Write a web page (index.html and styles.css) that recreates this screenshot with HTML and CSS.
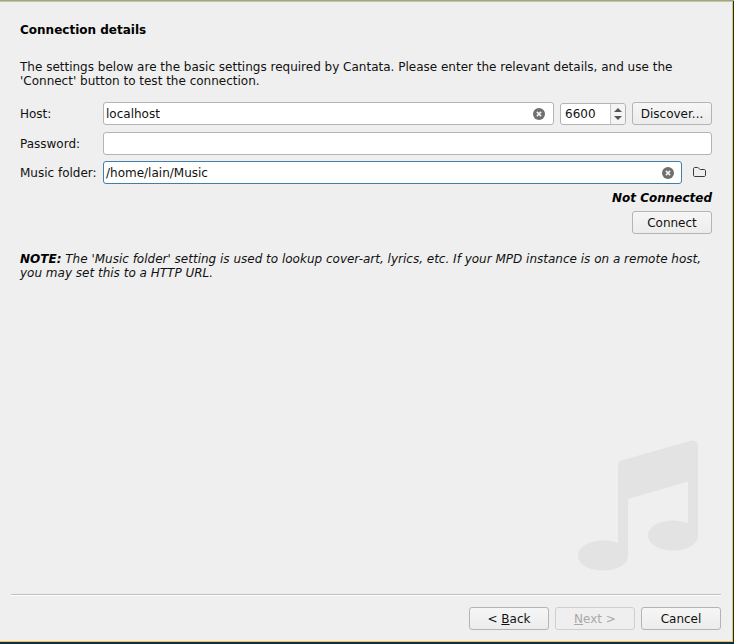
FILE: index.html
```html
<!DOCTYPE html>
<html lang="en">
<head>
<meta charset="utf-8">
<title>Connection details</title>
<link rel="stylesheet" href="styles.css">
</head>
<body>
<div class="desktop-top"></div>
<main class="window">
  <div class="content">
    <h1 class="title">Connection details</h1>
    <p class="intro">The settings below are the basic settings required by Cantata. Please enter the relevant details, and use the<br>'Connect' button to test the connection.</p>
    <div class="form">
      <div class="label">Host:</div>
      <div class="row">
        <div class="field grow">
          <span class="value">localhost</span>
          <svg class="clear" viewBox="0 0 14 14"><circle cx="7" cy="7" r="6" fill="#6f6f6f"/><path d="M4.900 4.900l4.200 4.200M9.100 4.900L4.900 9.100" stroke="#efefef" stroke-width="1.700"/></svg>
        </div>
        <div class="spin">
          <span class="spin-value">6600</span>
          <div class="spin-arrows">
            <svg viewBox="0 0 10 6" class="arrow"><path d="M5 1L9 5H1z" fill="#555"/></svg>
            <svg viewBox="0 0 10 6" class="arrow"><path d="M1 1H9L5 5z" fill="#555"/></svg>
          </div>
        </div>
        <button class="btn">Discover...</button>
      </div>
      <div class="label">Password:</div>
      <div class="row">
        <div class="field grow"></div>
      </div>
      <div class="label">Music folder:</div>
      <div class="row music">
        <div class="field grow focus">
          <span class="value">/home/lain/Music</span>
          <svg class="clear" viewBox="0 0 14 14"><circle cx="7" cy="7" r="6" fill="#6f6f6f"/><path d="M4.900 4.900l4.200 4.200M9.100 4.900L4.900 9.100" stroke="#efefef" stroke-width="1.700"/></svg>
        </div>
        <svg class="folder" viewBox="0 0 13 11"><path d="M.5 2C.5 1 1 .5 2 .5h2.500c.8 0 1 .3 1.500 1s.7 1 1.500 1H11c1 0 1.500.5 1.500 1.500v4c0 1-.5 1.500-1.500 1.500H2c-1 0-1.500-.5-1.500-1.500z" fill="none" stroke="#3a3a3a"/></svg>
      </div>
    </div>
    <div class="status">Not Connected</div>
    <div class="connect-row"><button class="btn">Connect</button></div>
    <p class="note"><b>NOTE:</b> The 'Music folder' setting is used to lookup cover-art, lyrics, etc. If your MPD instance is on a remote host, you may set this to a HTTP URL.</p>
  </div>
  <svg class="watermark" viewBox="0 0 120 130"><path d="M40 25.500c0-2.500 1.500-5 4-5.700L113 .2c3.500-1 7 1.500 7 5V95c0 9-11 15-25 15s-25-6.500-25-15 11-15 25-15c5 0 10 1 15 2.500V41L50 58.500V115c0 9-11 15-25 15S0 123.500 0 115s11-15 25-15c5 0 10 .5 15 2.500z" fill="#e3e3e3"/></svg>
  <div class="footer">
    <div class="separator"></div>
    <div class="actions">
      <button class="btn"><span>&lt; <u>B</u>ack</span></button>
      <button class="btn disabled"><span><u>N</u>ext &gt;</span></button>
      <button class="btn cancel">Cancel</button>
    </div>
  </div>
</main>
</body>
</html>
```
FILE: styles.css
```css
* { box-sizing: border-box; }
html, body { margin: 0; padding: 0; }
body {
  width: 734px;
  height: 644px;
  overflow: hidden;
  background: #12303c;
  font-family: "DejaVu Sans", sans-serif;
  font-size: 12px;
  color: #111;
}
.desktop-top { height: 1px; background: #6fb0d0; }
.window {
  position: relative;
  width: 733px;
  height: 641px;
  background: #efefef;
  border: 1px solid #f5c04f;
  border-left: 0;
  display: flex;
  flex-direction: column;
}
.content { flex: 1; padding: 0 20px; }
.title {
  margin: 21px 0 0;
  font-size: 12px;
  line-height: 15px;
  font-weight: bold;
  color: #000;
}
.intro {
  margin: 22px 0 0;
  line-height: 14px;
}
.form {
  margin-top: 14px;
  display: grid;
  grid-template-columns: 83px 1fr;
  grid-template-rows: 30px 29px 23px;
}
.label { line-height: 24px; height: 23px; }
.row { display: flex; gap: 6px; height: 23px; align-items: stretch; }
.grow { flex: 1; }
.field {
  display: flex;
  align-items: center;
  background: #fff;
  border: 1px solid #b4b4b4;
  border-radius: 3px;
  padding: 0 7px 0 2px;
}
.focus { border-color: #3f7fa8; padding-right: 6px; }
.value { flex: 1; }
.clear { width: 14px; height: 14px; }
.spin {
  width: 66px;
  display: flex;
  background: #fff;
  border: 1px solid #b4b4b4;
  border-radius: 3px;
  margin-top: 1px;
}
.spin-value { flex: 1; padding-left: 4px; line-height: 21px; }
.spin-arrows {
  width: 15px;
  border-left: 1px solid #c8c8c8;
  background: #f4f4f4;
  display: flex;
  flex-direction: column;
  justify-content: center;
  align-items: center;
  gap: 2px;
  padding-right: 1px;
  border-radius: 0 3px 3px 0;
}
.arrow { width: 10px; height: 6px; }
.btn {
  width: 80px;
  height: 23px;
  padding: 0;
  font: inherit;
  color: #111;
  background: linear-gradient(#f6f6f6, #ececec);
  border: 1px solid #b4b4b4;
  border-radius: 3px;
}
.music { gap: 0; }
.folder { width: 13px; height: 11px; margin: 6px 6px 0 11px; flex: none; }
.status {
  margin-top: 7px;
  text-align: right;
  font-weight: bold;
  font-style: italic;
  line-height: 15px;
  color: #000;
}
.connect-row { margin-top: 5px; display: flex; justify-content: flex-end; }
.note {
  margin: 18px 0 0;
  line-height: 14px;
  font-style: italic;
}
.note b { color: #000; }
.watermark {
  position: absolute;
  left: 578px;
  top: 438px;
  width: 120px;
  height: 131px;
}
.footer { padding: 0 11px 11px; }
.separator {
  height: 2px;
  background: #c0c0c0;
  border-bottom: 1px solid #fff;
}
.actions {
  margin-top: 11px;
  display: flex;
  justify-content: flex-end;
  gap: 6px;
}
.disabled { color: #a9a9a9; background: #efefef; border-color: #cfcfcf; }
```
